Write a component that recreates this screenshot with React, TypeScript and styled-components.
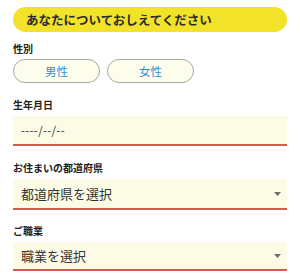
import React from "react";
import styled, { createGlobalStyle } from "styled-components";

const Global = createGlobalStyle`
  html, body { margin: 0; padding: 0; background: #ffffff; }
  body { font-family: "Noto Sans CJK JP", "Noto Sans", sans-serif; color: #222; }
  * { box-sizing: border-box; }
`;

const Page = styled.div`
  width: 300px;
  padding: 7px 13px 0;
  display: flex;
  flex-direction: column;
`;

const Heading = styled.h2`
  margin: 0;
  height: 25px;
  border-radius: 13px;
  background: #f2e22a;
  display: flex;
  align-items: center;
  padding-left: 13px;
  font-size: 12.5px;
  font-weight: 700;
  color: #2b2b2b;
  letter-spacing: 0;
`;

const Field = styled.div<{ $top: number }>`
  display: flex;
  flex-direction: column;
  margin-top: ${(p) => p.$top}px;
`;

const Label = styled.div<{ $gap: number }>`
  font-size: 10px;
  line-height: 14px;
  font-weight: 700;
  color: #222;
  margin-bottom: ${(p) => p.$gap}px;
`;

const ChoiceRow = styled.div`
  display: flex;
  gap: 7px;
`;

const Choice = styled.button`
  width: 87px;
  height: 24px;
  border: 1.5px solid #a9a9a3;
  border-radius: 12px;
  background: #fdfdec;
  color: #3b8bd4;
  font-family: inherit;
  font-size: 11.5px;
  padding: 0;
  display: flex;
  align-items: center;
  justify-content: center;
`;

const Box = styled.div<{ $h: number }>`
  height: ${(p) => p.$h}px;
  background: #fcfbe6;
  border-bottom: 2px solid #d9574c;
  display: flex;
  align-items: center;
  padding: 0 8px;
  justify-content: space-between;
`;

const DateText = styled.span`
  font-size: 11.5px;
  color: #333;
  letter-spacing: 0.3px;
`;

const SelectText = styled.span`
  font-size: 13px;
  color: #333;
`;

const Arrow = () => (
  <svg width="7" height="4" viewBox="0 0 7 4" style={{ marginRight: -2 }}>
    <path d="M0 0 L7 0 L3.5 4 Z" fill="#6e6e6e" />
  </svg>
);

export default function App() {
  return (
    <>
      <Global />
      <Page>
        <Heading>あなたについておしえてください</Heading>
        <Field $top={10}>
          <Label $gap={3}>性別</Label>
          <ChoiceRow>
            <Choice>男性</Choice>
            <Choice>女性</Choice>
          </ChoiceRow>
        </Field>
        <Field $top={15}>
          <Label $gap={4}>生年月日</Label>
          <Box $h={30}>
            <DateText>----/--/--</DateText>
          </Box>
        </Field>
        <Field $top={15}>
          <Label $gap={4}>お住まいの都道府県</Label>
          <Box $h={31}>
            <SelectText>都道府県を選択</SelectText>
            <Arrow />
          </Box>
        </Field>
        <Field $top={14}>
          <Label $gap={4}>ご職業</Label>
          <Box $h={29}>
            <SelectText>職業を選択</SelectText>
            <Arrow />
          </Box>
        </Field>
      </Page>
    </>
  );
}
